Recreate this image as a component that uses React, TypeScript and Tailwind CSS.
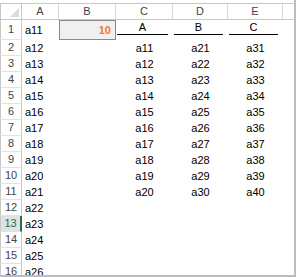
const cols = [
  { name: 'A', w: 'w-[37px]' },
  { name: 'B', w: 'w-[57px]' },
  { name: 'C', w: 'w-[57px]' },
  { name: 'D', w: 'w-[55px]' },
  { name: 'E', w: 'w-[55px]' },
];

const rows = Array.from({ length: 15 }, (_, i) => {
  const n = i + 2;
  return {
    n,
    a: `a${n + 10}`,
    c: n <= 11 ? `a${n + 9}` : '',
    d: n <= 11 ? `a${n + 19}` : '',
    e: n <= 11 ? `a${n + 29}` : '',
  };
});

export default function App() {
  return (
    <div
      className="w-[296px] h-[277px] bg-white overflow-hidden relative text-[11px] text-black"
      style={{ fontFamily: '"Liberation Sans", Arial, sans-serif' }}
    >
      <div className="pt-[3px]">
        {/* Column headers */}
        <div className="flex h-[17px] border-t border-b border-[#c8c8c8] text-[#444]">
          <div className="w-[22px] shrink-0 border-l border-r border-[#c8c8c8] relative">
            <svg className="absolute right-[2px] bottom-[2px]" width="9" height="9" viewBox="0 0 9 9">
              <polygon points="9,0 9,9 0,9" fill="#dcdcdc" />
            </svg>
          </div>
          {cols.map((c) => (
            <div key={c.name} className={`${c.w} shrink-0 border-r border-[#d8d8d8] flex items-center justify-center`}>
              {c.name}
            </div>
          ))}
          <div className="w-[11px] shrink-0" />
        </div>

        {/* Row 1 */}
        <div className="flex h-[20px]">
          <div className="w-[22px] shrink-0 border-l border-r border-b border-[#c8c8c8] border-b-[#e2e2e2] flex items-center justify-center text-[#444]">
            1
          </div>
          <div className="w-[37px] shrink-0 flex items-center pl-[3px]">a11</div>
          <div className="w-[57px] shrink-0 border border-[#8a8a8a] bg-[#f0f0f0] flex items-center justify-end pr-[4px] font-bold text-[#f47b20]">
            10
          </div>
          {['A', 'B', 'C'].map((t, i) => (
            <div key={t} className={`${i === 0 ? 'w-[57px]' : 'w-[55px]'} shrink-0 flex flex-col`}>
              <div className="h-[15px] flex items-end justify-center leading-none pb-[1px] mx-[1px] mr-[5px] border-b border-black">
                {t}
              </div>
            </div>
          ))}
        </div>

        {/* Rows 2+ */}
        {rows.map((r) => {
          const sel = r.n === 13;
          return (
            <div key={r.n} className="flex h-[16px]">
              <div
                className={`w-[22px] shrink-0 border-l border-b border-[#e2e2e2] border-l-[#c8c8c8] flex items-center justify-center ${
                  sel ? 'bg-[#e1e1e1] text-[#217346] border-r-2 border-r-[#217346]' : 'text-[#444] border-r border-r-[#c8c8c8]'
                }`}
              >
                {r.n}
              </div>
              <div className="w-[37px] shrink-0 flex items-center pl-[3px]">{r.a}</div>
              <div className="w-[57px] shrink-0" />
              <div className="w-[57px] shrink-0 flex items-center justify-center">{r.c}</div>
              <div className="w-[55px] shrink-0 flex items-center justify-center">{r.d}</div>
              <div className="w-[55px] shrink-0 flex items-center justify-center">{r.e}</div>
            </div>
          );
        })}
      </div>
      <div className="absolute top-0 right-0 w-[2px] h-full bg-[#bdbdbd]" />
      <div className="absolute bottom-0 left-0 h-[2px] w-full bg-[#bdbdbd]" />
    </div>
  );
}
